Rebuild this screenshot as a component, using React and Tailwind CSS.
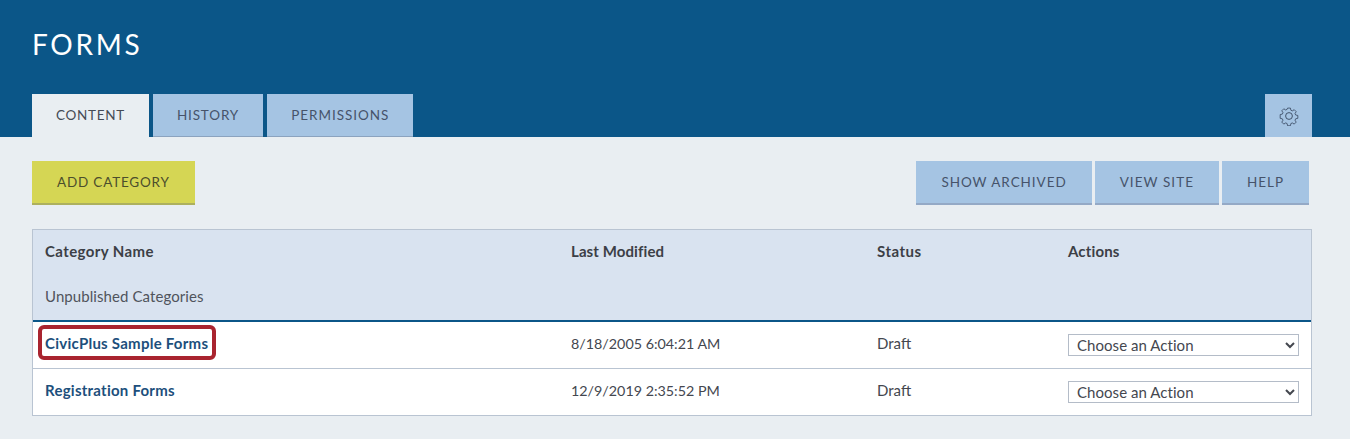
import React from "react";

function Tab({ children, active, className = "" }) {
  return (
    <div
      className={
        (active
          ? "h-[43px] px-6 flex items-center bg-[#e9eef2] text-[#454b55] text-[13.5px] uppercase "
          : "h-[43px] px-6 flex items-center bg-[#a5c4e3] border-b border-[#8ba3bf] text-[#46536a] text-[13.5px] uppercase ") + className
      }
    >
      {children}
    </div>
  );
}

function Btn({ children, yellow, className = "" }) {
  return (
    <div
      className={
        (yellow
          ? "h-[44px] px-[25px] flex items-center bg-[#d5d654] border-b-2 border-[#adb05e] text-[#4c4e2c] text-[13.5px] uppercase "
          : "h-[44px] px-[25px] flex items-center bg-[#a5c4e3] border-b-2 border-[#94a9c6] text-[#46536a] text-[13.5px] uppercase ") + className
      }
    >
      {children}
    </div>
  );
}

function Gear() {
  return (
    <svg width="20" height="20" viewBox="0 0 20 20" fill="none" stroke="#37475f" strokeWidth="0.9" strokeLinejoin="round">
      <circle cx="10" cy="10" r="3.4" />
      <path d="M8.4 1.2h3.2l.5 2.4 1.6.7 2.1-1.3 2.2 2.2-1.3 2.1.7 1.6 2.4.5v3.2l-2.4.5-.7 1.6 1.3 2.1-2.2 2.2-2.1-1.3-1.6.7-.5 2.4H8.4l-.5-2.4-1.6-.7-2.1 1.3-2.2-2.2 1.3-2.1-.7-1.6-2.4-.5V8.4l2.4-.5.7-1.6-1.3-2.1 2.2-2.2 2.1 1.3 1.6-.7z" transform="translate(1 1) scale(0.9)" />
    </svg>
  );
}

function ActionSelect() {
  return (
    <select className="block w-[231px] h-[22px] bg-white border border-[#b4bcc8] text-[#44474f] text-[15px] tracking-[0.05px] pl-[4px] pb-[4px] font-[inherit] outline-none appearance-auto">
      <option>Choose an Action</option>
    </select>
  );
}

const cols = "grid grid-cols-[538px_306px_191px_1fr]";

function Row({ name, date, highlight, last }) {
  return (
    <div className={`${cols} items-center bg-white text-[15px] text-[#44474f] ${last ? "h-[46px]" : "h-[47px] border-b border-[#b9c4d2]"}`}>
      <div className="relative pl-3 pb-[3px]">
        <a className="font-bold tracking-[0.25px] text-[#1d4f7c]">{name}</a>
        {highlight && (
          <div className="absolute left-[5px] top-[-7px] w-[178px] h-[35px] border-4 border-[#a9242f] rounded-[6px]" />
        )}
      </div>
      <div className="text-[14.3px] pb-[3px]">{date}</div>
      <div className="pb-[3px]">Draft</div>
      <ActionSelect />
    </div>
  );
}

export default function App() {
  return (
    <div className="h-[439px] bg-[#e9eef2] overflow-hidden font-['Lato','Open_Sans',sans-serif]">
      <div className="h-[137px] bg-[#0b5688] pl-8 pr-[38px] flex flex-col justify-between">
        <h1 className="pt-[24px] text-[28px] leading-[40px] tracking-[2.7px] text-white uppercase">Forms</h1>
        <div className="flex justify-between items-end">
          <div className="flex gap-1">
            <Tab active className="tracking-[0.7px]">Content</Tab>
            <Tab className="tracking-[0.85px]">History</Tab>
            <Tab className="tracking-[0.97px]">Permissions</Tab>
          </div>
          <div className="w-[47px] h-[43px] bg-[#a5c4e3] flex items-center justify-center">
            <Gear />
          </div>
        </div>
      </div>

      <div className="pl-8 pr-[38px] pt-6">
        <div className="flex justify-between pr-[3px]">
          <Btn yellow className="tracking-[0.8px]">Add Category</Btn>
          <div className="flex gap-[3px]">
            <Btn className="tracking-[0.95px]">Show Archived</Btn>
            <Btn className="tracking-[1.06px]">View Site</Btn>
            <Btn className="tracking-[0.95px]">Help</Btn>
          </div>
        </div>

        <div className="mt-6 border border-[#b9c4d2]">
          <div className="bg-[#d9e3f0] border-b-2 border-[#0b5688] h-[92px]">
            <div className={`${cols} h-[44px] pb-[2px] items-center text-[15px] font-bold text-[#3c3f46]`}>
              <div className="pl-3 tracking-[0.4px]">Category Name</div>
              <div className="tracking-[0.1px]">Last Modified</div>
              <div className="tracking-[0.5px]">Status</div>
              <div className="tracking-[0.15px]">Actions</div>
            </div>
            <div className="pl-3 pt-[10px] text-[15px] tracking-[0.08px] leading-[24px] text-[#50545c]">Unpublished Categories</div>
          </div>
          <Row name="CivicPlus Sample Forms" date="8/18/2005 6:04:21 AM" highlight />
          <Row name="Registration Forms" date="12/9/2019 2:35:52 PM" last />
        </div>
      </div>
    </div>
  );
}
